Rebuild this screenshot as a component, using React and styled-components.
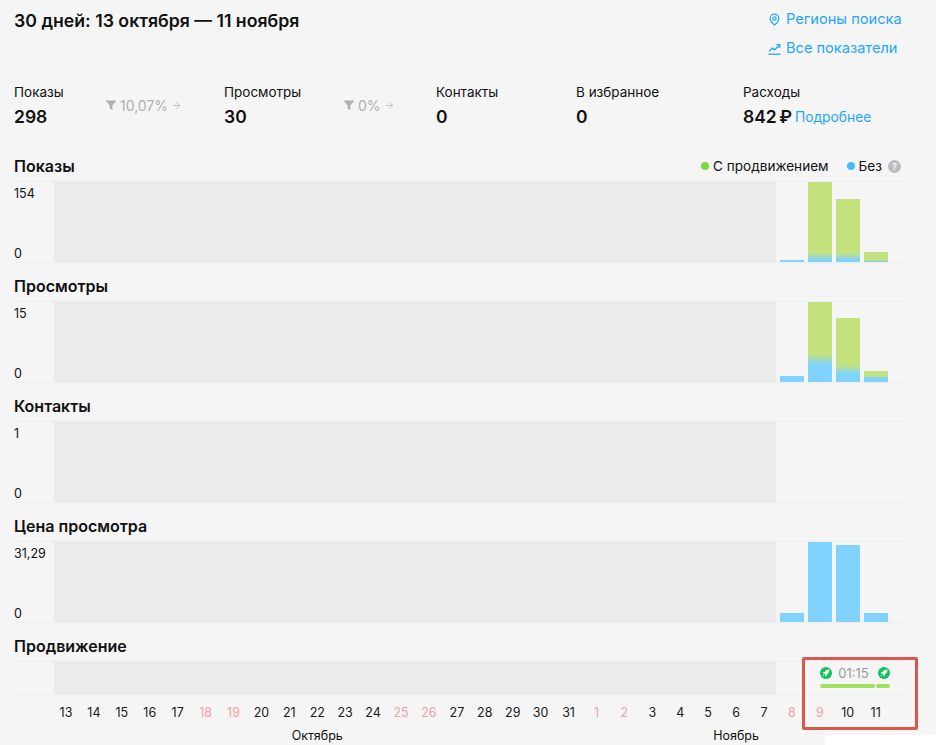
import styled, { createGlobalStyle } from 'styled-components';
import { ArrowRight, MapPin } from 'lucide-react';

const GlobalStyle = createGlobalStyle`
    html, body {
        margin: 0;
        height: 100%;
        overflow: hidden;
        background: #f5f5f5;
    }

    body {
        font-family: Inter, "Noto Sans", sans-serif;
        color: #111111;
    }
`;

const DAYS = [13, 14, 15, 16, 17, 18, 19, 20, 21, 22, 23, 24, 25, 26, 27, 28, 29, 30, 31, 1, 2, 3, 4, 5, 6, 7, 8, 9, 10, 11];
const WEEKEND = [18, 19, 25, 26, 1, 2, 8, 9];

const CHARTS = [
    {
        title: 'Показы',
        max: '154',
        bars: [
            { height: 2, blue: 2, fade: 2 },
            { height: 80, blue: 2, fade: 9 },
            { height: 63, blue: 2, fade: 9 },
            { height: 10, blue: 1, fade: 1 },
        ],
    },
    {
        title: 'Просмотры',
        max: '15',
        bars: [
            { height: 6, blue: 6, fade: 6 },
            { height: 80, blue: 17, fade: 28 },
            { height: 64, blue: 8, fade: 17 },
            { height: 11, blue: 5, fade: 5 },
        ],
    },
    { title: 'Контакты', max: '1', bars: [] },
    {
        title: 'Цена просмотра',
        max: '31,29',
        bars: [
            { height: 9, blue: 9, fade: 9 },
            { height: 80, blue: 80, fade: 80 },
            { height: 77, blue: 77, fade: 77 },
            { height: 9, blue: 9, fade: 9 },
        ],
    },
];

function Funnel() {
    return (
        <svg width="12" height="12" viewBox="0 0 12 12">
            <path d="M0.5 1.5h11L7.4 6.4V11L4.6 9.6V6.4z" fill="#b0b0b0" />
        </svg>
    );
}

function TrendIcon() {
    return (
        <svg width="13" height="13" viewBox="0 0 13 13" fill="none" stroke="#1ea7fd" strokeWidth="1.3">
            <path d="M0.5 12.2h12" />
            <path d="M1 9.4l3.3-3.2 2.2 1.6 5-4.6" />
            <path d="M8.3 2.7h3.4v3.2" />
        </svg>
    );
}

function RocketIcon() {
    return (
        <svg width="12" height="12" viewBox="0 0 12 12">
            <circle cx="6" cy="6" r="6" fill="#12c25a" />
            <path d="M9.4 2.6c-2-.1-3.5.7-4.6 2.3L3.2 5.2 2.6 6.3l1.7.3 1.1 1.1.3 1.7 1.1-.6.3-1.6c1.6-1.1 2.4-2.6 2.3-4.6z" fill="#ffffff" />
            <path d="M3.4 7.6 2.6 9.4l1.8-.8z" fill="#ffffff" />
        </svg>
    );
}

function ChartBlock({ title, max, bars, legend }) {
    return (
        <Section>
            <SectionHead>
                <SectionTitle>{title}</SectionTitle>
                {legend && (
                    <Legend>
                        <LegendItem><Dot $color="#7ed93b" />С продвижением</LegendItem>
                        <LegendItem><Dot $color="#45bcff" />Без<HelpCircle>?</HelpCircle></LegendItem>
                    </Legend>
                )}
            </SectionHead>
            <Plot>
                <Axis>
                    <span>{max}</span>
                    <span>0</span>
                </Axis>
                <PlotFill />
                <Bars>
                    {bars.map((bar, i) => (
                        <Bar key={i} $blue={bar.blue} $fade={bar.fade} style={{ height: bar.height }} />
                    ))}
                </Bars>
            </Plot>
        </Section>
    );
}

export default function App() {
    return (
        <Page>
            <GlobalStyle />

            <Header>
                <Title>30 дней: 13 октября — 11 ноября</Title>
                <Links>
                    <Link><MapPin size={13} strokeWidth={2.2} />Регионы поиска</Link>
                    <Link><TrendIcon />Все показатели</Link>
                </Links>
            </Header>

            <Stats>
                <Stat $width={91}>
                    <StatLabel>Показы</StatLabel>
                    <StatValue>298</StatValue>
                </Stat>
                <Conversion $width={119}><Funnel />10,07%<ArrowRight size={11} color="#bdbdbd" /></Conversion>
                <Stat $width={119}>
                    <StatLabel>Просмотры</StatLabel>
                    <StatValue>30</StatValue>
                </Stat>
                <Conversion $width={93}><Funnel />0%<ArrowRight size={11} color="#bdbdbd" /></Conversion>
                <Stat $width={140}>
                    <StatLabel>Контакты</StatLabel>
                    <StatValue>0</StatValue>
                </Stat>
                <Stat $width={167}>
                    <StatLabel>В избранное</StatLabel>
                    <StatValue>0</StatValue>
                </Stat>
                <Stat>
                    <StatLabel>Расходы</StatLabel>
                    <CostRow>
                        <StatValue>842 ₽</StatValue>
                        <More>Подробнее</More>
                    </CostRow>
                </Stat>
            </Stats>

            {CHARTS.map((chart, i) => (
                <ChartBlock key={chart.title} {...chart} legend={i === 0} />
            ))}

            <PromoSection>
                <SectionHead>
                    <SectionTitle>Продвижение</SectionTitle>
                </SectionHead>
                <PromoPlot>
                    <Axis />
                    <PlotFill />
                    <PromoCell>
                        <PromoTop>
                            <RocketIcon />
                            <PromoTime>01:15</PromoTime>
                            <RocketIcon />
                        </PromoTop>
                        <PromoBars>
                            <PromoBar $width={55} />
                            <PromoBar $width={14} />
                        </PromoBars>
                    </PromoCell>
                </PromoPlot>
            </PromoSection>

            <DaysRow>
                {DAYS.map((day) => (
                    <Day key={day} $weekend={WEEKEND.includes(day)}>{day}</Day>
                ))}
            </DaysRow>
            <MonthsRow>
                <Month $span={19}>Октябрь</Month>
                <Month $span={11}>Ноябрь</Month>
            </MonthsRow>

            <Highlight />
            <Corner />
        </Page>
    );
}

const Page = styled.div`
    position: relative;
    box-sizing: border-box;
    width: 936px;
    height: 745px;
    padding: 0 34px 0 14px;
    overflow: hidden;
    background: #f5f5f5;
`;

const Header = styled.header`
    display: flex;
    justify-content: space-between;
    align-items: flex-start;
    height: 82px;
`;

const Title = styled.h1`
    margin: 10px 0 0;
    font-size: 17.7px;
    line-height: 22px;
    font-weight: 600;
`;

const Links = styled.div`
    display: flex;
    flex-direction: column;
    gap: 11px;
    width: 134px;
    padding-top: 10px;
`;

const Link = styled.a`
    display: flex;
    align-items: center;
    gap: 5px;
    font-size: 14.6px;
    line-height: 18px;
    color: #1ea7fd;
    white-space: nowrap;
`;

const Stats = styled.div`
    display: flex;
    height: 72px;
`;

const Stat = styled.div`
    flex: none;
    width: ${(props) => (props.$width ? `${props.$width}px` : 'auto')};
`;

const StatLabel = styled.div`
    font-size: 13.5px;
    line-height: 20px;
`;

const StatValue = styled.div`
    margin-top: 4px;
    font-size: 17.5px;
    line-height: 22px;
    font-weight: 600;
    white-space: nowrap;
    word-spacing: -2px;
`;

const CostRow = styled.div`
    display: flex;
    align-items: center;
    gap: 3px;
`;

const More = styled.span`
    margin-top: 3px;
    font-size: 13.8px;
    line-height: 20px;
    color: #1ea7fd;
`;

const Conversion = styled.div`
    flex: none;
    display: flex;
    align-items: center;
    gap: 3px;
    align-self: flex-start;
    width: ${(props) => props.$width}px;
    height: 46px;
    font-size: 14px;
    color: #b0b0b0;
`;

const Section = styled.section`
    height: 120px;
`;

const PromoSection = styled.section`
    height: 61px;
`;

const SectionHead = styled.div`
    display: flex;
    justify-content: space-between;
    align-items: center;
    box-sizing: border-box;
    height: 27px;
    padding-bottom: 3px;
`;

const SectionTitle = styled.h2`
    margin: 0;
    font-size: 16px;
    line-height: 20px;
    font-weight: 600;
`;

const Legend = styled.div`
    display: flex;
    gap: 18px;
    margin-right: 1px;
    font-size: 13.6px;
`;

const LegendItem = styled.span`
    display: flex;
    align-items: center;
    gap: 4px;
`;

const Dot = styled.i`
    width: 8px;
    height: 8px;
    border-radius: 50%;
    background: ${(props) => props.$color};
`;

const HelpCircle = styled.b`
    display: flex;
    align-items: center;
    justify-content: center;
    width: 13px;
    height: 13px;
    margin-left: 2px;
    border-radius: 50%;
    background: #bcbcbc;
    color: #f5f5f5;
    font-size: 9px;
`;

const Plot = styled.div`
    display: flex;
    box-sizing: border-box;
    height: 82px;
    border-top: 1px solid #ececec;
    border-bottom: 1px solid #ececec;
`;

const PromoPlot = styled(Plot)`
    height: 34px;
`;

const Axis = styled.div`
    flex: none;
    display: flex;
    flex-direction: column;
    justify-content: space-between;
    box-sizing: border-box;
    width: 40px;
    padding: 4px 0 0;
    font-size: 12.5px;
    line-height: 16px;
`;

const PlotFill = styled.div`
    flex: none;
    width: 722px;
    background: #ebebeb;
`;

const Bars = styled.div`
    flex: 1;
    display: flex;
    align-items: flex-end;
    gap: 4px;
    padding-left: 4px;
`;

const Bar = styled.div`
    flex: none;
    width: 24px;
    background: linear-gradient(
        to top,
        #80d2ff ${(props) => props.$blue}px,
        #c3e27d ${(props) => props.$fade}px
    );
`;

const PromoCell = styled.div`
    flex: 1;
    display: flex;
    flex-direction: column;
    gap: 4px;
    padding: 4px 0 0 44px;
`;

const PromoTop = styled.div`
    display: flex;
    align-items: center;
    justify-content: space-between;
    width: 70px;
    height: 14px;
`;

const PromoTime = styled.span`
    margin-right: 3px;
    font-size: 13px;
    color: #9b9b9b;
`;

const PromoBars = styled.div`
    display: flex;
    gap: 1px;
`;

const PromoBar = styled.div`
    width: ${(props) => props.$width}px;
    height: 4px;
    border-radius: 2px;
    background: #9fe05c;
`;

const DaysRow = styled.div`
    display: grid;
    grid-template-columns: repeat(30, 27.93px);
    margin: 9px 0 0 38px;
`;

const Day = styled.span`
    font-size: 12.5px;
    line-height: 18px;
    text-align: center;
    color: ${(props) => (props.$weekend ? '#ff9c9c' : '#1a1a1a')};
`;

const MonthsRow = styled.div`
    display: grid;
    grid-template-columns: repeat(30, 27.93px);
    margin: 6px 0 0 38px;
`;

const Month = styled.span`
    grid-column: span ${(props) => props.$span};
    font-size: 12.5px;
    line-height: 16px;
    text-align: center;
`;

const Highlight = styled.div`
    position: absolute;
    left: 802px;
    top: 657px;
    box-sizing: border-box;
    width: 116px;
    height: 73px;
    border: 3px solid #d9574d;
    border-radius: 2px;
`;

const Corner = styled.div`
    position: absolute;
    left: 825px;
    top: 735px;
    width: 111px;
    height: 10px;
    border-top-left-radius: 3px;
    background: #ffffff;
`;
